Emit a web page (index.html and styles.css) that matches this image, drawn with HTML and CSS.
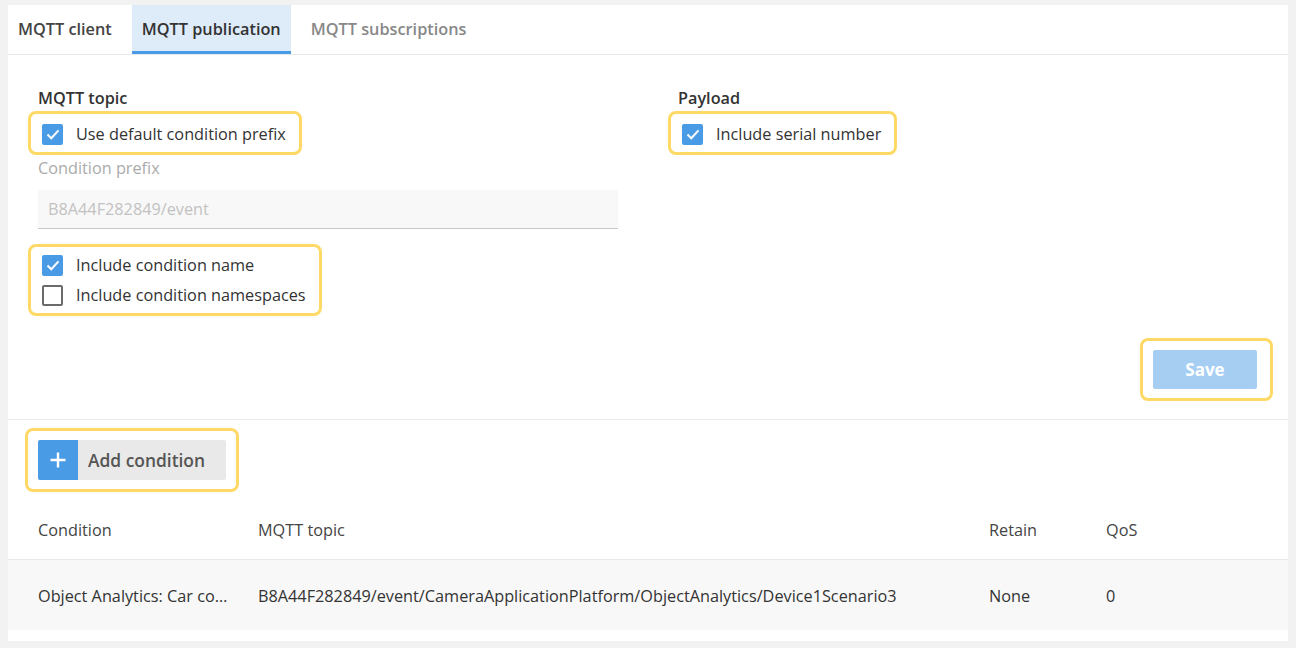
FILE: index.html
```html
<!DOCTYPE html>
<html lang="en">
<head>
<meta charset="utf-8">
<title>MQTT publication</title>
<link rel="stylesheet" href="styles.css">
</head>
<body>
<div class="panel">
  <nav class="tabs">
    <div class="tab">MQTT client</div>
    <div class="tab active">MQTT publication</div>
    <div class="tab muted">MQTT subscriptions</div>
  </nav>

  <section class="settings">
    <div class="columns">
      <div class="col col-left">
        <div class="heading">MQTT topic</div>
        <div class="hl hl-a">
          <label class="check-row"><span class="box checked"><svg viewBox="0 0 20 20" width="20" height="20"><path d="M4.5 10.5 L8.3 14.2 L15.5 6.3" fill="none" stroke="#fff" stroke-width="2"/></svg></span>Use default condition prefix</label>
        </div>
        <div class="field-label">Condition prefix</div>
        <div class="input">B8A44F282849/event</div>
        <div class="hl hl-b">
          <label class="check-row"><span class="box checked"><svg viewBox="0 0 20 20" width="20" height="20"><path d="M4.5 10.5 L8.3 14.2 L15.5 6.3" fill="none" stroke="#fff" stroke-width="2"/></svg></span>Include condition name</label>
          <label class="check-row"><span class="box"></span>Include condition namespaces</label>
        </div>
      </div>
      <div class="col col-right">
        <div class="heading">Payload</div>
        <div class="hl hl-a">
          <label class="check-row"><span class="box checked"><svg viewBox="0 0 20 20" width="20" height="20"><path d="M4.5 10.5 L8.3 14.2 L15.5 6.3" fill="none" stroke="#fff" stroke-width="2"/></svg></span>Include serial number</label>
        </div>
      </div>
    </div>
    <div class="save-row">
      <div class="hl hl-save"><button class="save">Save</button></div>
    </div>
  </section>

  <section class="conditions">
    <div class="hl hl-add">
      <button class="add"><span class="add-icon"><svg viewBox="0 0 40 40" width="40" height="40"><path d="M20 12.5 V27.5 M12.5 20 H27.5" stroke="#fff" stroke-width="2.4" fill="none"/></svg></span><span class="add-text">Add condition</span></button>
    </div>
    <div class="table">
      <div class="trow thead">
        <div class="cell">Condition</div>
        <div class="cell">MQTT topic</div>
        <div class="cell">Retain</div>
        <div class="cell">QoS</div>
      </div>
      <div class="trow tbody">
        <div class="cell ellipsis">Object Analytics: Car counting</div>
        <div class="cell">B8A44F282849/event/CameraApplicationPlatform/ObjectAnalytics/Device1Scenario3</div>
        <div class="cell">None</div>
        <div class="cell">0</div>
      </div>
    </div>
  </section>
</div>
</body>
</html>
```

FILE: styles.css
```css
* { box-sizing: border-box; }
html, body { margin: 0; padding: 0; }
body {
  background: #f2f2f2;
  font-family: "Open Sans", "Noto Sans", sans-serif;
  color: #333;
  width: 1296px;
  height: 648px;
  overflow: hidden;
}
.panel {
  margin: 5px 0 0 8px;
  width: 1280px;
  height: 636px;
  background: #fff;
  padding-bottom: 9px;
}
.tabs {
  display: flex;
  gap: 10px;
  height: 50px;
  border-bottom: 1px solid #e8e8e8;
}
.tab {
  height: 49px;
  padding: 2px 10px 0;
  display: flex;
  align-items: center;
  font-size: 16.3px;
  font-weight: 600;
  color: #444;
  border-bottom: 3px solid transparent;
}
.tab.active {
  background: #deebf9;
  border-bottom-color: #4a9be6;
  color: #333;
}
.tab.muted { color: #888; }

.settings {
  padding: 33px 31px 18px 30px;
  border-bottom: 1px solid #ebebeb;
}
.columns { display: flex; gap: 60px; }
.col { display: flex; flex-direction: column; align-items: flex-start; }
.col-left { width: 580px; }
.col-right { flex: 1; }
.heading {
  font-size: 16.25px;
  font-weight: 600;
  line-height: 20px;
  color: #333;
}
.hl {
  border: 3px solid #ffd966;
  border-radius: 8px;
}
.hl-a {
  margin: 3px 0 0 -10px;
  padding: 5px 13px 3px 7px;
}
.hl-b {
  margin: 15px 0 0 -10px;
  padding: 3px 13px 3px 7px;
}
.check-row {
  display: flex;
  align-items: center;
  height: 30px;
  font-size: 16.25px;
  color: #333;
}
.box {
  width: 21px;
  height: 21px;
  margin: 0 13px 0 4px;
  border: 2px solid #6b6b6b;
  border-radius: 2px;
  background: #fff;
  display: flex;
  align-items: center;
  justify-content: center;
  flex: none;
}
.box.checked {
  border: none;
  background: #4a9be6;
}
.box svg { display: block; }
.field-label {
  margin-top: 3px;
  font-size: 16.25px;
  line-height: 21px;
  color: #ababab;
}
.input {
  margin-top: 11px;
  width: 580px;
  height: 39px;
  background: #f8f8f8;
  border-bottom: 1px solid #c8c8c8;
  padding: 0 10px;
  display: flex;
  align-items: center;
  font-size: 16.25px;
  color: #c2c2c2;
  border-radius: 2px 2px 0 0;
}
.save-row {
  display: flex;
  justify-content: flex-end;
  margin-top: 22px;
}
.hl-save {
  margin-right: -16px;
  padding: 9px 13px 9px 10px;
}
.save {
  width: 104px;
  height: 39px;
  border: none;
  border-radius: 2px;
  background: #a5cef2;
  color: #fff;
  font-family: inherit;
  font-size: 17px;
  font-weight: 700;
}

.conditions { padding-top: 8px; }
.hl-add {
  display: inline-block;
  margin-left: 17px;
  padding: 9px 10px;
}
.add {
  display: flex;
  height: 40px;
  padding: 0;
  border: none;
  background: #e9e9e9;
  border-radius: 2px;
  font-family: inherit;
}
.add-icon {
  width: 40px;
  height: 40px;
  background: #4a9be6;
  border-radius: 2px 0 0 2px;
}
.add-icon svg { display: block; }
.add-text {
  display: flex;
  align-items: center;
  width: 148px;
  padding-left: 10px;
  font-size: 17.4px;
  font-weight: 600;
  color: #555;
}
.table { margin-top: 8px; }
.trow {
  display: grid;
  grid-template-columns: 220px 731px 117px 1fr;
  padding-left: 30px;
  align-items: center;
  font-size: 16.25px;
}
.thead {
  height: 60px;
  border-bottom: 1px solid #eaeaea;
  color: #444;
}
.tbody {
  height: 70px;
  padding-top: 1px;
  background: #f8f8f8;
  color: #333;
}
.cell { white-space: nowrap; }
.ellipsis {
  overflow: hidden;
  text-overflow: ellipsis;
  padding-right: 26px;
}
```
